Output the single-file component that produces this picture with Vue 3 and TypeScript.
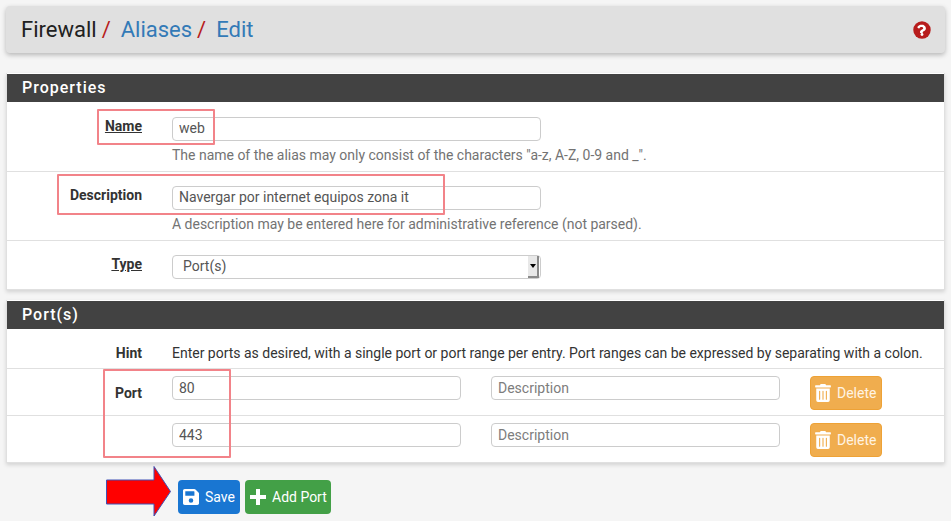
<script setup lang="ts">
interface PortRow {
  label: string
  value: string
}

const ports: PortRow[] = [
  { label: 'Port', value: '80' },
  { label: '', value: '443' }
]
</script>

<template>
  <div class="page">
    <header class="crumbs">
      <h2 class="trail">
        <span>Firewall</span><i class="sep">/</i>
        <a class="link">Aliases</a><i class="sep">/</i>
        <a class="link">Edit</a>
      </h2>
      <svg class="help" viewBox="0 0 512 512" aria-hidden="true">
        <circle cx="256" cy="256" r="248" fill="#b71c1c" />
        <path
          d="M256 96c-62 0-102 26-133 72-4 6-3 13 3 17l36 27c6 4 13 3 18-2 19-24 32-38 61-38 22 0 49 14 49 35 0 16-13 24-34 36-25 14-58 31-58 75v8c0 7 5 12 12 12h56c7 0 12-5 12-12v-5c0-30 89-32 89-114 0-62-64-111-112-111z"
          fill="#fff"
        />
        <circle cx="256" cy="384" r="40" fill="#fff" />
      </svg>
    </header>

    <section class="panel first">
      <h3 class="panel-title">Properties</h3>
      <div class="row name-row">
        <label class="label req">Name</label>
        <div class="field">
          <input class="input" value="web" />
          <p class="hint">The name of the alias may only consist of the characters "a-z, A-Z, 0-9 and _".</p>
        </div>
      </div>
      <div class="row desc-row">
        <label class="label">Description</label>
        <div class="field">
          <input class="input" value="Navergar por internet equipos zona it" />
          <p class="hint">A description may be entered here for administrative reference (not parsed).</p>
        </div>
      </div>
      <div class="row type-row">
        <label class="label req">Type</label>
        <div class="field">
          <div class="select">
            <span>Port(s)</span>
            <span class="select-btn"><b class="caret"></b></span>
          </div>
        </div>
      </div>
    </section>

    <section class="panel second">
      <h3 class="panel-title">Port(s)</h3>
      <div class="row hint-row">
        <label class="label">Hint</label>
        <div class="hint-text">Enter ports as desired, with a single port or port range per entry. Port ranges can be expressed by separating with a colon.</div>
      </div>
      <div v-for="p in ports" :key="p.value" class="row port-row">
        <label class="label port-label">{{ p.label }}</label>
        <input class="input port" :value="p.value" />
        <input class="input port desc" placeholder="Description" />
        <button class="btn delete">
          <svg class="ico trash" viewBox="0 0 448 512" aria-hidden="true">
            <path
              fill="#fff"
              d="M32 464a48 48 0 0 0 48 48h288a48 48 0 0 0 48-48V128H32zm272-256a16 16 0 0 1 32 0v224a16 16 0 0 1-32 0zm-96 0a16 16 0 0 1 32 0v224a16 16 0 0 1-32 0zm-96 0a16 16 0 0 1 32 0v224a16 16 0 0 1-32 0zM432 32H312l-9-19a24 24 0 0 0-22-13H167a24 24 0 0 0-22 13l-9 19H16A16 16 0 0 0 0 48v32a16 16 0 0 0 16 16h416a16 16 0 0 0 16-16V48a16 16 0 0 0-16-16z"
            />
          </svg>
          Delete
        </button>
      </div>
    </section>

    <div class="actions">
      <button class="btn save">
        <svg class="ico floppy" viewBox="0 0 448 448" aria-hidden="true">
          <path
            fill="#fff"
            d="M434 98 350 14A48 48 0 0 0 316 0H48C21 0 0 21 0 48v352c0 27 21 48 48 48h352c27 0 48-21 48-48V132a48 48 0 0 0-14-34zM224 384a64 64 0 1 1 0-128 64 64 0 0 1 0 128zM320 80v100c0 7-5 12-12 12H76c-7 0-12-5-12-12V76c0-7 5-12 12-12h228c3 0 6 1 9 4l3 3c3 3 4 6 4 9z"
          />
        </svg>
        Save
      </button>
      <button class="btn add">
        <svg class="ico plus" viewBox="0 0 16 16" aria-hidden="true">
          <path fill="#fff" d="M6 0h4v6h6v4h-6v6H6v-6H0V6h6z" />
        </svg>
        Add Port
      </button>
    </div>

    <!-- red marks drawn over the screenshot -->
    <div class="mark mark-name"></div>
    <div class="mark mark-desc"></div>
    <div class="mark mark-port"></div>
    <svg class="arrow" viewBox="0 0 66 52" aria-hidden="true">
      <polygon points="0.500,14 48,14 48,0.500 64.500,25.500 48,50 48,38 0.500,38" fill="#ff0000" stroke="#3f51b5" stroke-width="1" />
    </svg>
  </div>
</template>

<style scoped>
.page {
  position: relative;
  width: 951px;
  height: 521px;
  overflow: hidden;
  box-sizing: border-box;
  padding: 6px 6px 0;
  background: #f5f5f5;
  font-family: Roboto, "Liberation Sans", sans-serif;
  font-size: 14px;
  color: #212121;
}

.crumbs {
  display: flex;
  align-items: center;
  justify-content: space-between;
  height: 47px;
  padding: 0 14px 0 15px;
  background: #e0e0e0;
  border-radius: 4px;
  box-shadow: 0 2px 5px rgba(0, 0, 0, 0.26);
}

.trail {
  margin: 0;
  font-size: 22px;
  font-weight: 400;
  line-height: 47px;
  white-space: nowrap;
}

.sep {
  margin: 0 10px 0 5px;
  font-style: normal;
  color: #b71c1c;
}

.link {
  color: #337ab7;
}

.help {
  width: 18px;
  height: 18px;
}

.panel {
  background: #fff;
  border: 1px solid #e0e0e0;
  border-top: 0;
  box-shadow: 0 2px 4px rgba(0, 0, 0, 0.14);
}

.first {
  margin-top: 20px;
  padding-top: 1px;
}

.second {
  margin-top: 10px;
  padding-top: 1px;
}

.panel-title {
  margin: 0;
  height: 28px;
  padding-left: 15px;
  background: #424242;
  color: #fff;
  font-size: 16px;
  font-weight: 500;
  line-height: 28px;
  letter-spacing: 1px;
}

.row {
  display: flex;
  align-items: flex-start;
  box-sizing: border-box;
  padding-top: 14px;
  border-top: 1px solid #e0e0e0;
}

.panel-title + .row {
  border-top: 0;
}

.name-row {
  height: 69px;
  padding-top: 15px;
}

.desc-row {
  height: 69px;
}

.type-row {
  height: 49px;
}

.label {
  flex: none;
  width: 135px;
  margin-right: 30px;
  text-align: right;
  font-weight: 700;
  line-height: 19px;
  color: #333;
}

.req {
  text-decoration: underline;
}

.field {
  width: 369px;
  white-space: nowrap;
}

.input {
  box-sizing: border-box;
  display: block;
  width: 369px;
  height: 24px;
  padding: 0 6px 2px;
  border: 1px solid #ccc;
  border-radius: 4px;
  background: #fff;
  color: #555;
  font: 400 14px Roboto, "Liberation Sans", sans-serif;
  outline: none;
}

.input::placeholder {
  color: #7d7d7d;
}

.hint {
  margin: 4px 0 0;
  font-size: 14px;
  line-height: 20px;
  letter-spacing: -0.01px;
  color: #737373;
}

.select {
  display: flex;
  align-items: center;
  justify-content: space-between;
  box-sizing: border-box;
  height: 24px;
  padding: 0 1px 0 10px;
  border: 1px solid #ccc;
  border-radius: 4px;
  color: #555;
}

.select span:first-child {
  padding-bottom: 2px;
}

.select-btn {
  display: flex;
  align-items: center;
  justify-content: center;
  box-sizing: border-box;
  width: 11px;
  height: 22px;
  background: #e8e8e8;
  border-right: 2px solid #8a8a8a;
  border-bottom: 2px solid #8a8a8a;
}

.caret {
  border-left: 3px solid transparent;
  border-right: 3px solid transparent;
  border-top: 4px solid #000;
}

.hint-row {
  height: 39px;
  padding-top: 15px;
}

.hint-text {
  font-size: 14px;
  line-height: 19px;
  letter-spacing: -0.01px;
  white-space: nowrap;
  color: #333;
}

.port-row {
  height: 47px;
  padding-top: 7px;
}

.port-label {
  padding-top: 8px;
}

.port {
  width: 289px;
  flex: none;
  padding-bottom: 0;
}

.desc {
  margin-left: 30px;
}

.btn {
  display: inline-flex;
  align-items: center;
  box-sizing: border-box;
  height: 34px;
  padding: 0 4px;
  border: 1px solid transparent;
  border-radius: 4px;
  color: #fff;
  font: 400 14px Roboto, "Liberation Sans", sans-serif;
  white-space: nowrap;
}

.ico {
  flex: none;
  margin-right: 6px;
}

.trash {
  width: 16px;
  height: 18px;
}

.floppy {
  width: 16px;
  height: 16px;
}

.delete {
  margin-left: 30px;
  width: 72px;
  background: #f0ad4e;
  border-color: #eea236;
  color: #fff4e4;
}

.actions {
  display: flex;
  gap: 5px;
  padding: 17px 0 0 172px;
}

.save {
  width: 62px;
  background: #1976d2;
}

.add {
  width: 86px;
  background: #43a047;
}

.plus {
  width: 16px;
  height: 16px;
}

.mark {
  position: absolute;
  box-sizing: border-box;
  border: 2px solid #f28389;
  border-radius: 1px;
}

.mark-name {
  left: 97px;
  top: 109px;
  width: 118px;
  height: 36px;
}

.mark-desc {
  left: 57px;
  top: 174px;
  width: 388px;
  height: 41px;
}

.mark-port {
  left: 103px;
  top: 369px;
  width: 128px;
  height: 89px;
}

.arrow {
  position: absolute;
  left: 106px;
  top: 466px;
  width: 66px;
  height: 52px;
}
</style>

<style>
html,
body {
  margin: 0;
  background: #f5f5f5;
}
</style>
